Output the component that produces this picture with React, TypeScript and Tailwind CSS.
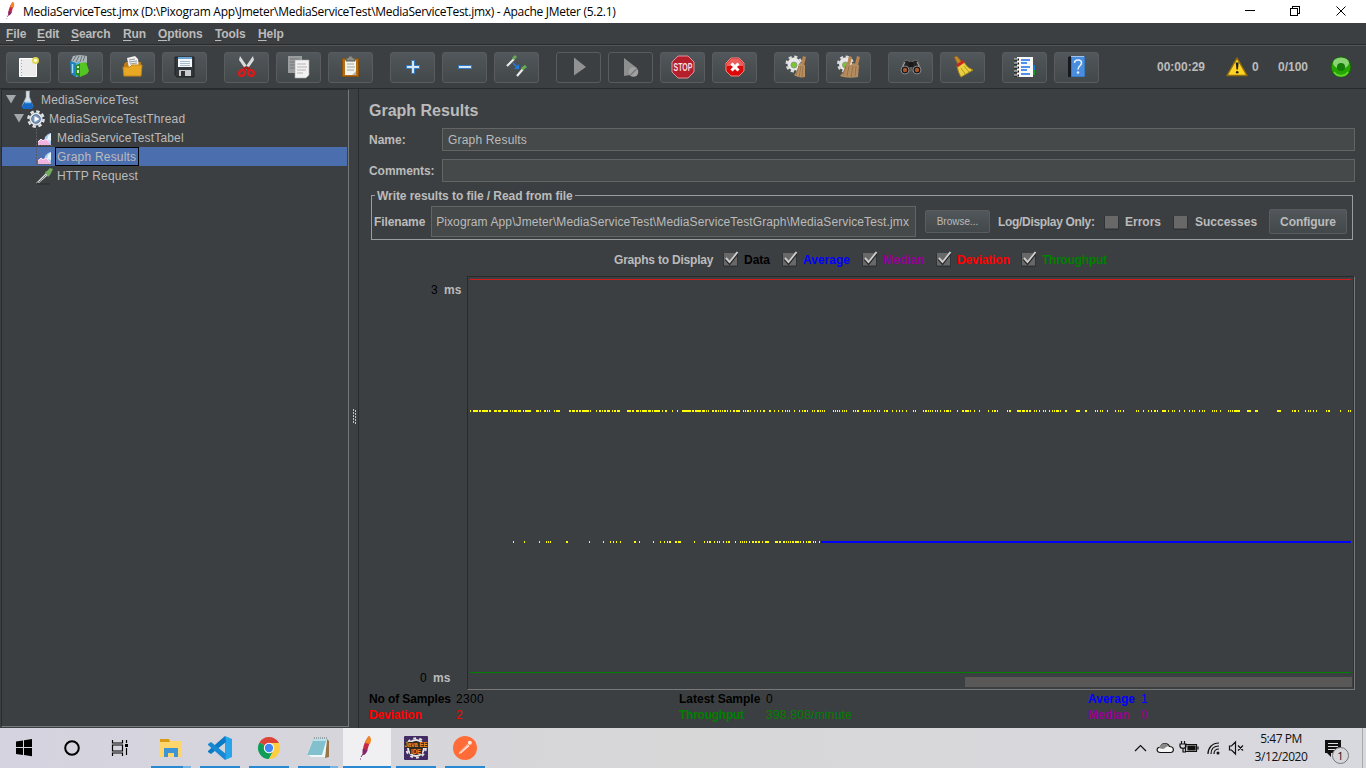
import React, { ReactNode } from "react";

type Seg = number | [number, number];

const UPPER: Seg[] = [
  10, [13, 5], [19, 2], [22, 6], [29, 2], [34, 3], [38, 3], [43, 5], 50, 52, [54, 3], [58, 3], 63, [65, 6], [76, 3], 80,
  [84, 2], 87, 89, 94, [96, 4], [109, 2], [112, 3], [116, 2], [119, 2], [122, 7], 130, 136, [139, 2], 142, [144, 2],
  [147, 3], 152, [154, 2], [157, 3], [167, 4], [172, 2], [176, 3], 180, [182, 5], [188, 3], 192, [194, 6], 202, [205, 2],
  212, 217, [222, 9], [232, 2], [235, 6], [242, 3], 246, 248, [252, 2], [255, 2], 258, 260, 262, [264, 2], 267, 270,
  [273, 2], [276, 4], 283, 285, [287, 2], 290, 294, 297, 300, [303, 2], [309, 2], 314, 318, 322, 325, 327, 329, 334, 339,
  342, [344, 2], 347, 352, 354, [357, 2], 360, 362, 364, 373, 375, 377, 379, 382, 384, 386, 393, 395, [397, 2], [403, 2],
  406, 408, 410, 414, 417, 419, 424, [426, 2], 432, 436, 439, 442, 446, 453, 455, 463, [465, 2], 468, 470, 472, 475, 477,
  480, 484, [486, 3], 490, 497, [502, 2], [505, 4], 510, 514, 519, 528, 532, [534, 2], 537, 547, [549, 2], [557, 4],
  [562, 3], [566, 2], [569, 2], 574, 576, 579, 583, 585, 589, 592, 594, [596, 3], 600, [605, 2], [616, 4], [625, 2], 635,
  637, 640, 642, 647, 655, 658, 660, 663, 676, 678, 683, 688, 691, [694, 2], 697, [702, 4], 708, 712, 714, 719, 724, 729,
  732, 734, 739, 742, 744, 752, 754, 756, 760, 768, 770, 772, [774, 6], [787, 4], [795, 3], [817, 4], 832, [834, 2], 838,
  845, 848, 850, 853, 856, 866, [868, 2], 880, 888, 890,
];
const LOWER: Seg[] = [
  53, 64, 79, 86, 88, 90, [106, 2], 129, 143, 150, 153, 156, 160, [174, 2], 179, 193, 200, 204, 207, [209, 2], [215, 2],
  [218, 3], 234, 244, 247, [249, 2], 254, 257, 259, 263, 266, [268, 2], 275, 280, 282, 284, 286, 289, [292, 2], [295, 2],
  [298, 2], 302, [305, 4], [315, 3], [319, 2], [323, 2], 326, 328, 330, [332, 2], [335, 4], 340, 343, 346, [348, 3], 353,
  355, 359,
];

const segPath = (segs: Seg[], y: number) =>
  segs
    .map((s) => {
      const [x, w] = Array.isArray(s) ? s : [s, 1];
      return `M${x + 460} ${y}h${w}v2h-${w}z`;
    })
    .join("");

function Svg({ s = 24, children }: { s?: number; children: ReactNode }) {
  return (
    <svg width={s} height={s} viewBox={`0 0 ${s} ${s}`} className="block shrink-0 overflow-visible">
      {children}
    </svg>
  );
}

function Feather() {
  return (
    <>
      <path d="M14 0c3 3 0 8-1 12-1 4-3 7-5 7-1-5 1-14 6-19z" fill="#c72848" />
      <path d="M14 0c3 2 2 5 1 8l-5-1c1-3 2-5 4-7z" fill="#f08a24" />
      <path d="M7.600 13l5 1c-1 3-3 5-5 5z" fill="#7d2a72" />
      <path d="M8 18l-2 3M5.500 22.500v1" stroke="#7a2a78" strokeWidth="1" />
    </>
  );
}

const gear = (
  <>
    <circle cx="9" cy="9" r="6.500" fill="#e8e8e8" />
    <circle cx="9" cy="9" r="7.300" fill="none" stroke="#dcdcdc" strokeWidth="2.400" strokeDasharray="3.200 2.530" />
    <circle cx="9" cy="10" r="3" fill="#75c92d" stroke="#8e9a86" />
  </>
);

const ICONS: Record<string, ReactNode> = {
  new: (
    <>
      <path d="M2.500 3.500h17v18h-17z" fill="#ececec" stroke="#fff" />
      <path d="M4.500 5v16" stroke="#aaa" strokeDasharray="1 2" />
      <circle cx="18.500" cy="5.500" r="3.500" fill="#e3d64e" />
      <circle cx="18.500" cy="5.500" r="1.800" fill="#fffbd0" />
    </>
  ),
  templates: (
    <>
      <path d="M2 6l2-5 7-1 7 1v7l-9 3z" fill="#aeb6ba" />
      <path d="M4 6l3-5M7 7l3-6M11 7l2-6M14 6l2-5" stroke="#68737b" strokeWidth="1" />
      <path d="M1 6l6 2v14l-5-3z" fill="#1d84bd" />
      <path d="M3.500 9v9" stroke="#9bdcff" strokeWidth="1.500" />
      <path d="M7 8l4-2v15l-4 1z" fill="#56b5e0" />
      <path d="M7 10l5-2v14l-5-2z" fill="#2b8a1c" />
      <path d="M11 8l6-1 3 9-2 3-7 3z" fill="#53c622" />
      <path d="M9 11v2m0 2v3" stroke="#fff" strokeWidth="1.500" />
    </>
  ),
  open: (
    <>
      <path d="M3 9l2-2h15v14H3z" fill="#bd7b15" />
      <path d="M6 3l8-2 3 3 1 9H8z" fill="#f1f1f1" />
      <path d="M8 5l6-1M8 7l8-1M9 9l7-1" stroke="#999" />
      <path d="M2 12h7l2-2h10l-1 11H3z" fill="#e9a823" stroke="#c78616" />
    </>
  ),
  save: (
    <>
      <path d="M2 2h19v20H4l-2-2z" fill="#32373c" stroke="#222" />
      <path d="M5 2h14v10H5z" fill="#f5f8fa" />
      <path d="M5 2h14v2H5z" fill="#68a4d4" />
      <path d="M7 6.500h10M7 8.500h10M7 10.500h10" stroke="#a6bccb" />
      <path d="M6 15h12v6H6z" fill="#c9cccd" />
      <path d="M8 16h4v5H8z" fill="#333" />
    </>
  ),
  cut: (
    <>
      <path d="M5 1l9 13-3 1L4 5zM18 1L9 14l3 1 7-10z" fill="#d9dbdc" />
      <path d="M11 12l-2 3M12 12l2 3" stroke="#b31313" strokeWidth="2.500" />
      <ellipse cx="7" cy="18" rx="3.200" ry="2.700" fill="none" stroke="#d91a1a" strokeWidth="2.500" transform="rotate(-40 7 18)" />
      <ellipse cx="16" cy="18" rx="3.200" ry="2.700" fill="none" stroke="#d91a1a" strokeWidth="2.500" transform="rotate(40 16 18)" />
    </>
  ),
  copy: (
    <>
      <path d="M1 1h14v17H1z" fill="#9a9d9e" />
      <path d="M3 4h10M3 7h5M3 10h5M3 13h5" stroke="#777" />
      <path d="M8 5h14v15l-3 3H8z" fill="#f2f2f2" stroke="#aaa" strokeWidth=".6" />
      <path d="M10 9h9M10 12h10M10 15h9M10 18h6" stroke="#b4b4b4" />
    </>
  ),
  paste: (
    <>
      <path d="M3.500 3.500h16v18h-16z" fill="#b56c13" stroke="#8a4f0b" />
      <path d="M6 5h11v15H6z" fill="#f3f3ee" />
      <path d="M7 6V3h2l1-2h3l1 2h2v3z" fill="#8a8d87" stroke="#55584f" />
      <path d="M8 9h7M8 12h8M8 15h7" stroke="#a2a2a2" />
      <path d="M17 16v4h-4z" fill="#b7b7b7" />
    </>
  ),
  plus: <path d="M10.500 5.500h3v5h5v3h-5v5h-3v-5h-5v-3h5z" fill="#d5e7f6" stroke="#3479c4" />,
  minus: <path d="M5.500 10.500h13v3h-13z" fill="#d5e7f6" stroke="#3479c4" />,
  toggle: (
    <>
      <path d="M2 11l7-7" stroke="#e9eeea" strokeWidth="2.200" />
      <path d="M8 4l3-3" stroke="#65aa55" strokeWidth="3" />
      <path d="M12 21l6-7" stroke="#e9eeea" strokeWidth="2.200" />
      <path d="M17 14l4-3" stroke="#65aa55" strokeWidth="3" />
      <path d="M8 8l4 4" stroke="#247ade" strokeWidth="1.500" />
      <path d="M14 9v5H9z" fill="#247ade" />
    </>
  ),
  start: <path d="M7 2.500v18L19 12z" fill="#919292" />,
  startno: (
    <>
      <path d="M5 3v18l6-1 7-7z" fill="#8d8e8e" />
      <circle cx="14.500" cy="17" r="4.800" fill="#a0a1a1" />
      <path d="M11.500 20l6-6" stroke="#777" strokeWidth="1.400" />
    </>
  ),
  stop: (
    <>
      <path d="M7 1h10l6 6v10l-6 6H7l-6-6V7z" fill="#b51e2b" stroke="#df9299" />
      <text x="12" y="10.800" transform="scale(1 1.5)" textAnchor="middle" fontSize="7" fontWeight="700" fontFamily="Liberation Sans, sans-serif" fill="#f5dede">STOP</text>
    </>
  ),
  shutdown: (
    <>
      <path d="M8 3h8l5 5v8l-5 5H8l-5-5V8z" fill="#dc0909" stroke="#ed8a85" />
      <path d="M8 4h8l4 4v3H4V8z" fill="#ef7772" opacity=".8" />
      <path d="M8.500 8.500l7 7m0-7l-7 7" stroke="#fff" strokeWidth="3" />
    </>
  ),
  clear: (
    <>
      {gear}
      <path d="M18 1l3 1-2 8-3-1z" fill="#b78552" />
      <path d="M14 8l6 2 0 12c-4 1-8 0-11-2 3-3 4-7 5-12z" fill="#b98f60" />
      <path d="M14 11l-3 9M16 11l-2 11M18 11l-1 11" stroke="#8b6941" strokeWidth=".7" />
    </>
  ),
  clearall: (
    <>
      <g transform="translate(-.5 0)">{gear}</g>
      <path d="M12 1l3 1-2 8-3-1zM20 1l3 1-2 8-3-1z" fill="#b78552" />
      <path d="M9 8l5 2 2-2 6 2-1 12c-6 1-13 1-18-1 3-3 5-8 6-13z" fill="#b58c5f" />
      <path d="M9 11l-3 9M12 11l-2 10M16 11l-2 11M19 11l-1 10" stroke="#87643d" strokeWidth=".7" />
    </>
  ),
  search: (
    <>
      <path d="M5 6l3-1 3 2v9H2zM19 6l-3-1-3 2v9h9z" fill="#242424" stroke="#777" strokeWidth=".8" />
      <path d="M10 7h4v5h-4z" fill="#191919" />
      <path d="M6 7l-3 6M18 7l3 6" stroke="#b2b2b2" strokeWidth="1" />
      <circle cx="6" cy="15" r="4" fill="#161616" stroke="#888" />
      <circle cx="18" cy="15" r="4" fill="#161616" stroke="#888" />
      <circle cx="6" cy="15" r="2.200" fill="#a7572b" />
      <circle cx="18" cy="15" r="2.200" fill="#a7572b" />
    </>
  ),
  sweep: (
    <>
      <path d="M3 2l3-1 5 6-4 3z" fill="#c08628" stroke="#75521a" strokeWidth="0.5" />
      <path d="M6 11l6-5 3 4c2 3 5 4 7 5l-12 7c-2-3-3-7-4-11z" fill="#e9cf42" stroke="#aa8a17" />
      <path d="M10 13l4 6M13 11l5 6" stroke="#b9961d" />
      <path d="M6 11l7-5" stroke="#c92720" strokeWidth="2.800" />
    </>
  ),
  functions: (
    <>
      <path d="M16 10h6v5h-6z" fill="#1977d1" />
      <path d="M16 15h6v5h-6z" fill="#159c25" />
      <path d="M4 2h16v20H4z" fill="#f9f9f9" />
      <path d="M8 5h9M8 8h6M8 12h9M8 15h6M8 19h9" stroke="#1670e8" strokeWidth="1.300" />
      <path d="M1 4.500h5M1 8.500h5M1 12.500h5M1 16.500h5M1 20.500h5" stroke="#111" strokeWidth="2" />
      <path d="M1 4h4M1 8h4M1 12h4M1 16h4M1 20h4" stroke="#fff" strokeWidth="1" />
    </>
  ),
  help: (
    <>
      <path d="M3 2l3-1v21H3z" fill="#161a20" />
      <path d="M6.500 1.500h13v20h-13z" fill="#4b8ddd" stroke="#397bc5" />
      <path d="M6 1.500h13" stroke="#a4c5e9" />
      <path d="M9.500 8c0-4 7-4 7 0 0 3-3.500 2.500-3.500 6.500" fill="none" stroke="#e9f2ff" strokeWidth="1.500" />
      <circle cx="13" cy="17.500" r="1.200" fill="#e9f2ff" />
    </>
  ),
};

const GROUPS = [
  ["new", "templates", "open", "save"],
  ["cut", "copy", "paste"],
  ["plus", "minus", "toggle"],
  ["start", "startno", "stop", "shutdown"],
  ["clear", "clearall"],
  ["search", "sweep"],
  ["functions", "help"],
];

function Check({ on = false }: { on?: boolean }) {
  return (
    <svg width="16" height="16" viewBox="0 0 16 16" className="block shrink-0">
      <rect x="0" y="2" width="15" height="14" rx="1.500" fill="#303335" />
      <rect x="1" y="2" width="13" height="12.500" fill="#686868" />
      {on && <path d="M3 8l3.500 4L14 2.500" stroke="#262626" strokeWidth="3.200" fill="none" />}
      {on && <path d="M3 7l3.500 4L14.500 1" stroke="#cccccc" strokeWidth="2" fill="none" />}
    </svg>
  );
}

const GraphIcon = (
  <Svg s={18}>
    <path d="M1.500 0v16.500H17" stroke="#595d60" fill="none" strokeDasharray="2 1" />
    <path d="M9 13l1-5 3-3 3-1v12H9z" fill="#a9cdf0" />
    <path d="M12 11l1-4 3-3v8z" fill="#e8f6ff" />
    <path d="M3 16v-4l3-2 2 1 3-1 5 6z" fill="#eeb4df" />
    <path d="M3 13l3-3 2 2 3-2 4 4" stroke="#ffe1f7" fill="none" />
  </Svg>
);

function Arrow() {
  return (
    <svg width="10" height="9" viewBox="0 0 10 9" className="block shrink-0">
      <path d="M0 0h10L5 8.500z" fill="#a5a6a7" />
    </svg>
  );
}

function TreeLabel({ children, w }: { children: ReactNode; w: string }) {
  return <span className={`tracking-[0.16px] ${w}`}>{children}</span>;
}

function Task({ children, extra = false }: { children: ReactNode; extra?: boolean }) {
  return (
    <div className="flex h-10 w-[49px] flex-col items-center">
      <div className="flex h-[38px] items-center pt-0.5">{children}</div>
      <div className="flex h-0.5 w-10 justify-end bg-[#2889d2]">{extra && <div className="h-0.5 w-2 bg-[#79b3df]" />}</div>
    </div>
  );
}

export default function App() {
  return (
    <div className="flex h-[768px] w-[1366px] flex-col overflow-hidden whitespace-nowrap bg-[#3c3f41] font-['Liberation_Sans',sans-serif] text-[12px] leading-[14px] text-[#bbbbbb]">
      <header className="flex h-[23px] shrink-0 items-center bg-white text-black">
        <svg width="12" height="17" viewBox="3 0 14 24" className="mb-[3px] ml-1 block"><Feather /></svg>
        <span className="ml-[7px] flex-1 font-['Open_Sans',sans-serif] text-[12px] tracking-[-0.29px]">
          MediaServiceTest.jmx (D:\Pixogram App\Jmeter\MediaServiceTest\MediaServiceTest.jmx) - Apache JMeter (5.2.1)
        </span>
        <svg width="116" height="20" viewBox="0 0 116 20" className="mb-[2px] mr-[12px] block" fill="none" stroke="#000" shapeRendering="crispEdges">
          <path d="M7 9.500h10M52.500 7.500h7v7h-7zM54.500 7V5.500h7v7H60" />
          <path d="M98.500 5.500l9 9m0-9l-9 9" shapeRendering="auto" />
        </svg>
      </header>

      <nav className="flex h-[21px] shrink-0 items-center font-bold">
        {[
          ["File", "ml-[6px] w-[31px]"],
          ["Edit", "w-[34px]"],
          ["Search", "w-[52px]"],
          ["Run", "w-[35px]"],
          ["Options", "w-[57px]"],
          ["Tools", "w-[43px]"],
          ["Help", ""],
        ].map(([t, c]) => (
          <span key={t} className={`tracking-[-0.1px] ${c}`}>
            <span className="underline underline-offset-2">{t[0]}</span>
            {t.slice(1)}
          </span>
        ))}
      </nav>

      <div className="flex h-[45px] shrink-0 items-center border-b border-t border-[#282a2b] font-bold">
        <div className="flex h-full flex-1 items-center gap-[17px] border-t border-[#555555] pl-[6px]">
          {GROUPS.map((g) => (
            <div key={g[0]} className="flex gap-[7px]">
              {g.map((n) => (
                <button
                  key={n}
                  className={`flex h-[31px] w-[45px] items-center justify-center rounded-[3px] border border-[#595c5d] ${n.startsWith("start") ? "bg-[#3c3f41]" : "bg-linear-to-b from-[#51575a] to-[#43484a]"}`}
                >
                  <Svg>{ICONS[n]}</Svg>
                </button>
              ))}
            </div>
          ))}
          <div className="ml-[41px] flex items-center">
            <span className="w-[69px]">00:00:29</span>
            <Svg s={22}>
              <path d="M11 2l10 17.500H1z" fill="#ffd323" stroke="#8e6c0d" strokeWidth="1.500" strokeLinejoin="round" />
              <path d="M9.700 6.500h3l-.8 7h-1.400z" fill="#222" />
              <circle cx="11.200" cy="16.300" r="1.300" fill="#222" />
            </Svg>
            <span className="ml-[4px] w-[26px]">0</span>
            <span className="w-[52px]">0/100</span>
            <Svg s={22}>
              <circle cx="11" cy="11" r="10" fill="#25a500" stroke="#126500" />
              <ellipse cx="11" cy="7" rx="8" ry="5.500" fill="#b5e8a7" opacity=".7" />
              <circle cx="11" cy="11" r="4" fill="#147c08" />
              <path d="M4 16c3 5 11 5 14 0" stroke="#5fd42e" strokeWidth="2" fill="none" />
            </Svg>
          </div>
        </div>
      </div>

      <div className="flex min-h-0 flex-1">
        <aside className="ml-px flex h-[638px] w-[348px] shrink-0 flex-col border border-b-[#777] border-l-[#292b2c] border-r-[#777] border-t-[#292b2c] pr-px">
          <div className="flex h-[19px] items-center pl-1">
            <Arrow />
            <span className="ml-[3px] mr-[4px]">
              <Svg s={18}>
                <path d="M7 0h4l-.5 1v5L14 15l-1 2H4l-1-2 4-9V1z" fill="#d5e0e7" stroke="#8998a4" strokeWidth=".6" />
                <path d="M5.500 11h7l2 5-2 2h-8l-2-2z" fill="#1767c4" />
                <path d="M6 11.500h6" stroke="#75baf2" strokeWidth="1.500" />
              </Svg>
            </span>
            <TreeLabel w="w-[100px]">MediaServiceTest</TreeLabel>
          </div>
          <div className="flex h-[19px] items-center pl-3">
            <Arrow />
            <span className="ml-[3px] mr-[4px]">
              <Svg s={18}>
                <circle cx="9" cy="9" r="6.500" fill="#e2e5e8" />
                <circle cx="9" cy="9" r="7.600" fill="none" stroke="#e2e5e8" strokeWidth="2.400" strokeDasharray="3.400 2.569" />
                <circle cx="9" cy="9" r="4.300" fill="#7d98bb" stroke="#50729e" />
                <path d="M7.500 6l5 3-5 3z" fill="#fff" />
              </Svg>
            </span>
            <TreeLabel w="w-[138px]">MediaServiceTestThread</TreeLabel>
          </div>
          <div className="flex h-[19px] items-center gap-[4px] pl-[33px]">
            {GraphIcon}
            <TreeLabel w="w-[130px]">MediaServiceTestTabel</TreeLabel>
          </div>
          <div className="flex h-[19px] items-center gap-[2px] bg-[#4b6eaf] pl-[33px]">
            {GraphIcon}
            <span className="h-[19px] w-[84px] border border-black pl-px pt-[2px] tracking-[0.2px]">Graph Results</span>
          </div>
          <div className="flex h-[19px] items-center gap-[4px] pl-[33px]">
            <Svg s={18}>
              <path d="M2 17h13" stroke="#282b2c" />
              <path d="M1 16L11 6l2 2L4 16z" fill="#d6d9d9" />
              <path d="M1 16l3-1 7-7" stroke="#77827d" fill="none" />
              <path d="M10 5l2-1 3-3 3 1-3 6-2 2z" fill="#70aa5c" />
            </Svg>
            <TreeLabel w="w-[90px]">HTTP Request</TreeLabel>
          </div>
        </aside>
        <div className="flex w-[9px] shrink-0 items-center justify-center">
          <svg width="5" height="16" viewBox="0 0 5 16" className="ml-px mt-[16px] block">
            <path d="M1 1h1m1 1h1M1 4h1m1 1h1M1 7h1m1 1h1M1 10h1m1 1h1M1 13h1m1 1h1" stroke="#eee" strokeWidth="1.300" />
          </svg>
        </div>

        <main className="flex min-w-0 flex-1 flex-col border-l border-[#292b2c]">
          <h1 className="ml-[10px] mt-[13px] h-[26px] text-[16px] font-bold leading-[18px]">Graph Results</h1>
          <div className="ml-[10px] flex h-[23px] items-center">
            <span className="w-[73px] font-bold">Name:</span>
            <div className="flex h-[23px] w-[913px] items-center border border-[#646464] bg-[#45494a] pl-[5px] tracking-[0.18px]">Graph Results</div>
          </div>
          <div className="ml-[10px] mt-[8px] flex h-[23px] items-center">
            <span className="w-[73px] font-bold tracking-[-0.05px]">Comments:</span>
            <div className="h-[23px] w-[913px] border border-[#646464] bg-[#45494a]" />
          </div>
          <fieldset className="ml-[12px] mt-[6px] h-[52px] w-[982px] border border-[#9a9c9d] font-bold">
            <legend className="ml-[3px] w-[200px] pl-[2px] pt-px leading-[14px] tracking-[-0.06px]">Write results to file / Read from file</legend>
            <div className="ml-[2px] mt-[3px] flex h-[31px] items-center">
              <span className="w-[57px] tracking-[-0.1px]">Filename</span>
              <div className="flex h-[31px] w-[485px] items-center justify-end overflow-hidden border border-[#646464] bg-[#45494a] pl-[5px] pr-[6px] font-normal">
                <div className="flex w-full justify-end overflow-hidden">
                  <span className="tracking-[0.11px]">Pixogram App\Jmeter\MediaServiceTest\MediaServiceTestGraph\MediaServiceTest.jmx</span>
                </div>
              </div>
              <button className="ml-[9px] h-[23px] w-[65px] rounded-[2px] border border-[#595c5d] bg-linear-to-b from-[#51575a] to-[#43484a] text-[10px] font-normal">Browse...</button>
              <span className="ml-[8px] w-[106px] tracking-[-0.32px]">Log/Display Only:</span>
              <Check />
              <span className="ml-[5px] w-[48px]">Errors</span>
              <Check />
              <span className="ml-[6px] w-[74px]">Successes</span>
              <button className="h-[25px] w-[78px] rounded-[2px] border border-[#595c5d] bg-linear-to-b from-[#51575a] to-[#43484a] font-bold tracking-[-0.1px]">Configure</button>
            </div>
          </fieldset>
          <div className="mt-[12px] flex h-[16px] items-center pl-[255px] font-bold">
            <span className="w-[109px] tracking-[-0.2px]">Graphs to Display</span>
            <div className="mb-[2px]"><Check on /></div>
            <span className="ml-[5px] w-[38px] text-black">Data</span>
            <div className="mb-[2px]"><Check on /></div>
            <span className="ml-[5px] w-[59px] text-[#0000ff]">Average</span>
            <div className="mb-[2px]"><Check on /></div>
            <span className="ml-[5px] w-[53px] text-[#960096]">Median</span>
            <div className="mb-[2px]"><Check on /></div>
            <span className="ml-[5px] w-[64px] tracking-[-0.15px] text-[#ff0000]">Deviation</span>
            <div className="mb-[2px]"><Check on /></div>
            <span className="ml-[5px] tracking-[-0.25px] text-[#008000]">Throughput</span>
          </div>
          <div className="mt-[8px] flex h-[413px] shrink-0">
            <div className="flex w-[108px] flex-col justify-between pb-[4px] pt-[7px]">
              <div className="ml-[72px] flex"><span className="w-[13px] text-black">3</span><b>ms</b></div>
              <div className="ml-[61px] flex"><span className="w-[13px] text-black">0</span><b>ms</b></div>
            </div>
            <div className="h-[414px] w-[888px] border border-b-[#777] border-l-[#28292a] border-r-[#777] border-t-[#28292a]">
              <svg width="886" height="412" viewBox="468 277 886 412" className="block" shapeRendering="crispEdges">
                <path d="M470 279.500h881" stroke="#d41b1b" />
                <path d={segPath(UPPER, 410)} fill="#ffff00" />
                <path d={segPath(LOWER, 541)} fill="#ffff00" />
                <path d="M821 542h530" stroke="#0000ff" strokeWidth="2" />
                <path d="M470 672.500h881" stroke="#008000" />
                <path d="M1353.500 277v411" stroke="#303234" />
                <rect x="965" y="677" width="387" height="10" rx="1" fill="#595856" />
              </svg>
            </div>
          </div>
          <div className="mt-[2px] grid grid-cols-[87px_223px_87px_322px_53px_50px] pl-[10px] leading-4">
            <b className="tracking-[-0.12px] text-black">No of Samples</b><span className="tracking-[0.3px] text-black">2300</span>
            <b className="text-black">Latest Sample</b><span className="text-black">0</span>
            <b className="text-[#0000ff]">Average</b><span className="text-[#0000ff]">1</span>
            <b className="tracking-[-0.15px] text-[#ff0000]">Deviation</b><span className="text-[#ff0000]">2</span>
            <b className="tracking-[-0.25px] text-[#008000]">Throughput</b><span className="tracking-[0.24px] text-[#008000]">398.808/minute</span>
            <b className="text-[#960096]">Median</b><span className="text-[#960096]">0</span>
          </div>
        </main>
      </div>

      <footer className="flex h-10 shrink-0 bg-[#d6d5dc] bg-linear-to-r from-[#d5d3df] via-[#d7d7d8] to-[#d8d8df] text-[#111]">
        <div className="flex w-[146px] items-center gap-6 pl-3">
          <Svg><path d="M4 5.500l7-1V11H4zM12 4.300l8-1.300v8h-8zM4 12h7v7l-7-1zM12 12h8v8.300l-8-1.200z" fill="#000" /></Svg>
          <Svg><circle cx="12" cy="12" r="6.800" fill="none" stroke="#000" strokeWidth="2" /></Svg>
          <Svg>
            <path d="M4.500 4v3h10V4M4.500 20v-3h10v3M4.500 9h10v6h-10zM18.500 4v3M18.500 12v7" fill="none" stroke="#000" strokeWidth="1.200" />
            <path d="M17 8h3v3h-3z" fill="#000" />
          </Svg>
        </div>
        <Task extra>
          <Svg>
            <path d="M1 3h9l2 2h10v16H1z" fill="#ffd66b" />
            <path d="M1 3h9l1 3H1z" fill="#d99b13" />
            <path d="M5 12h14v9h-4v-4H9v4H5z" fill="#3d95d4" />
          </Svg>
        </Task>
        <Task>
          <Svg>
            <path d="M17 0l7 3v18l-7 3z" fill="#27a4ea" />
            <path d="M17 0l1 6L3 18l-3-2v-1z" fill="#087bc4" />
            <path d="M0 8l3-2 15 12-1 6L0 9z" fill="#1689d2" />
          </Svg>
        </Task>
        <Task>
          <Svg>
            <path d="M2.470 6.500A11 11 0 0 1 21.530 6.500L12 12z" fill="#db4437" />
            <path d="M2.470 6.500A11 11 0 0 0 12 23L16.500 14.500 12 12z" fill="#0f9d58" />
            <path d="M21.530 6.500A11 11 0 0 1 12 23L16.700 14 12 7z" fill="#ffcd40" />
            <path d="M12 7h9.800l-2.300-3H7z" fill="#db4437" />
            <circle cx="12" cy="12" r="5.200" fill="#fff" />
            <circle cx="12" cy="12" r="4.200" fill="#4285f4" />
          </Svg>
        </Task>
        <Task extra>
          <Svg>
            <path d="M21 3l2 2v16l-4 1z" fill="#987447" />
            <path d="M8 2h13l-2 19H5l-4-3z" fill="#eef8f8" />
            <path d="M8 2h13l-5 17H1z" fill="#82c0cd" />
            <path d="M8 2h13l-1 3H7z" fill="#bce0e5" />
            <path d="M8 2h13" stroke="#667477" strokeDasharray="1 1" />
          </Svg>
        </Task>
        <div className="-mx-px flex h-10 w-[51px] justify-center">
          <div className="flex h-10 w-12 flex-col items-center bg-[#f0eff1]">
            <div className="flex h-[38px] items-center pt-0.5"><Svg><Feather /></Svg></div>
            <div className="h-0.5 w-12 bg-[#2889d2]" />
          </div>
        </div>
        <Task>
          <Svg>
            <rect width="24" height="24" rx="1" fill="#432c63" />
            <circle cx="12" cy="12" r="8" fill="#292426" stroke="#e4e4e4" strokeWidth="2" />
            <circle cx="12" cy="12" r="9.800" fill="none" stroke="#e4e4e4" strokeWidth="2" strokeDasharray="2.900 3.257" />
            <path d="M1 6h22v6H1zM6 12h12v6H6z" fill="#34291f" />
            <text x="12" y="9.200" transform="scale(1 1.25)" textAnchor="middle" fontSize="6" fontWeight="700" fontFamily="Liberation Sans, sans-serif" fill="#f78b1e">Java EE</text>
            <text x="12" y="14.200" transform="scale(1 1.25)" textAnchor="middle" fontSize="6" fontWeight="700" fontFamily="Liberation Sans, sans-serif" fill="#f78b1e">IDE</text>
          </Svg>
        </Task>
        <Task>
          <Svg>
            <circle cx="12" cy="12" r="12" fill="#ff6c37" />
            <path d="M5.500 18l1-2 8-8 2 2-8 7z" fill="#ffe9de" />
            <path d="M7 16.500l8-8" stroke="#ff6c37" strokeWidth=".7" />
            <circle cx="16.800" cy="6.800" r="2" fill="#ffe9de" />
          </Svg>
        </Task>
        <div className="ml-auto flex items-center">
          <svg width="112" height="24" viewBox="0 0 112 24" className="block" fill="none" stroke="#111" strokeWidth="1.200">
            <path d="M1 15l5.500-5.500L12 15" />
            <path d="M26.500 16.500c-5 0-4-6 0-5 1-5 7-5 9-1 5 0 5 6 1 6z" fill="#f5f5f5" />
            <path d="M25 12c2-5 7-6 10-2-3 0-4 3-6 3s-2-1-4-1z" fill="#888" stroke="none" />
            <path d="M51.500 8.500h11v7h-11zM64 10.500v3" />
            <path d="M54 10h7v4h-7z" fill="#111" />
            <path d="M47.500 5v3m3-3v3m-4.500 0h6v2c0 3-6 3-6 0zm3 4v4h3" />
            <path d="M74 18c0-6 4-11 11-11M77 18c0-5 3-8 8-8M80 18c0-3 2-5 5-5" />
            <circle cx="84" cy="17" r="1.500" fill="#111" stroke="none" />
            <path d="M95.500 10h2l4-4v12l-4-4h-2zM104 9.500l5 5m0-5l-5 5" />
          </svg>
          <div className="w-[68px] pl-[2px] text-center font-['Open_Sans',sans-serif] text-[12px] leading-[18px] tracking-[-0.45px]">
            <div>5:47 PM</div>
            <div>3/12/2020</div>
          </div>
          <svg width="44" height="40" viewBox="1318 728 44 40" className="ml-[4px] block">
            <path d="M1325 740h16v13h-10v4l-4-4h-2z" fill="#111" />
            <path d="M1328 743.500h10M1328 746.500h10M1328 749.500h7" stroke="#ddd" />
            <circle cx="1340.500" cy="755.500" r="8" fill="#d7d6db" stroke="#777" />
            <text x="1340.500" y="759.500" textAnchor="middle" fontSize="11" fontFamily="Open Sans, sans-serif" fill="#111">1</text>
          </svg>
          <div className="h-10 w-1 border-l border-[#aaa]" />
        </div>
      </footer>
    </div>
  );
}
